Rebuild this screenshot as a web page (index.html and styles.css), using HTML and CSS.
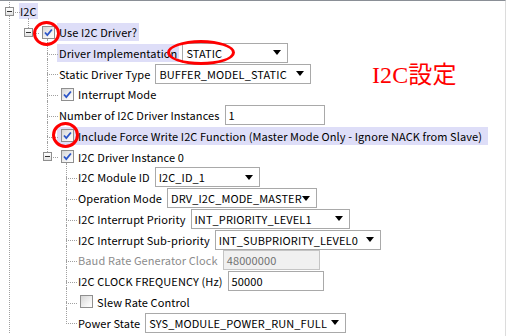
FILE: index.html
```html
<!DOCTYPE html>
<html lang="ja">
<head>
    <meta charset="UTF-8">
    <title>I2C設定</title>
    <link rel="stylesheet" href="styles.css">
</head>
<body>
    <div class="panel">
        <ul class="tree">
            <li class="more">
                <div class="row"><span class="handle"></span><span class="label hl">I2C</span></div>
                <ul>
                    <li>
                        <div class="row">
                            <span class="handle"></span>
                            <span class="check"><svg width="13" height="13" viewBox="0 0 13 13"><path d="M3 6.5l2.3 2.6 4.6-5.6" fill="none" stroke="#2b55c8" stroke-width="1.8"/></svg></span>
                            <span class="label hl">Use I2C Driver?</span>
                        </div>
                        <ul>
                            <li>
                                <div class="row"><span class="label hl">Driver Implementation</span><span class="select impl">STATIC<i class="arrow"></i></span></div>
                            </li>
                            <li>
                                <div class="row"><span class="label">Static Driver Type</span><span class="select buffer">BUFFER_MODEL_STATIC<i class="arrow"></i></span></div>
                            </li>
                            <li>
                                <div class="row">
                                    <span class="check"><svg width="13" height="13" viewBox="0 0 13 13"><path d="M3 6.5l2.3 2.6 4.6-5.6" fill="none" stroke="#2b55c8" stroke-width="1.8"/></svg></span>
                                    <span class="label">Interrupt Mode</span>
                                </div>
                            </li>
                            <li>
                                <div class="row"><span class="label">Number of I2C Driver Instances</span><span class="field count">1</span></div>
                            </li>
                            <li>
                                <div class="row">
                                    <span class="cell hl-row">
                                        <span class="check"><svg width="13" height="13" viewBox="0 0 13 13"><path d="M3 6.5l2.3 2.6 4.6-5.6" fill="none" stroke="#2b55c8" stroke-width="1.8"/></svg></span>
                                        <span class="label">Include Force Write I2C Function (Master Mode Only - Ignore NACK from Slave)</span>
                                    </span>
                                </div>
                            </li>
                            <li>
                                <div class="row">
                                    <span class="handle"></span>
                                    <span class="check"><svg width="13" height="13" viewBox="0 0 13 13"><path d="M3 6.5l2.3 2.6 4.6-5.6" fill="none" stroke="#2b55c8" stroke-width="1.8"/></svg></span>
                                    <span class="label">I2C Driver Instance 0</span>
                                </div>
                                <ul>
                                    <li>
                                        <div class="row"><span class="label">I2C Module ID</span><span class="select module">I2C_ID_1<i class="arrow"></i></span></div>
                                    </li>
                                    <li>
                                        <div class="row"><span class="label">Operation Mode</span><span class="select mode">DRV_I2C_MODE_MASTER<i class="arrow"></i></span></div>
                                    </li>
                                    <li>
                                        <div class="row"><span class="label">I2C Interrupt Priority</span><span class="select prio">INT_PRIORITY_LEVEL1<i class="arrow"></i></span></div>
                                    </li>
                                    <li>
                                        <div class="row"><span class="label">I2C Interrupt Sub-priority</span><span class="select subprio">INT_SUBPRIORITY_LEVEL0<i class="arrow"></i></span></div>
                                    </li>
                                    <li>
                                        <div class="row"><span class="label off">Baud Rate Generator Clock</span><span class="field baud disabled">48000000</span></div>
                                    </li>
                                    <li>
                                        <div class="row"><span class="label">I2C CLOCK FREQUENCY (Hz)</span><span class="field freq">50000</span></div>
                                    </li>
                                    <li>
                                        <div class="row">
                                            <span class="check"></span>
                                            <span class="label">Slew Rate Control</span>
                                        </div>
                                    </li>
                                    <li>
                                        <div class="row"><span class="label">Power State</span><span class="select power">SYS_MODULE_POWER_RUN_FULL<i class="arrow"></i></span></div>
                                    </li>
                                </ul>
                            </li>
                        </ul>
                    </li>
                </ul>
            </li>
        </ul>

        <!-- anotações em vermelho -->
        <span class="mark mark-driver"></span>
        <span class="mark mark-static"></span>
        <span class="mark mark-force"></span>
        <div class="note">I2C設定</div>
    </div>
</body>
</html>
```

FILE: styles.css
```css
* {
    box-sizing: border-box;
}

body {
    margin: 0;
    background: #fff;
    color: #000;
    font-family: "Noto Sans CJK JP", "Noto Sans", sans-serif;
    font-size: 11px;
    letter-spacing: 0.1px;
}

.panel {
    position: relative;
    width: 506px;
    height: 336px;
    overflow: hidden;
    border-top: 1px solid #8a8f96;
    border-right: 1px solid #dcdcdc;
}

/* Árvore */

.tree,
.tree ul {
    list-style: none;
    margin: 0 0 0 9px;
    padding: 0;
}

.tree li {
    position: relative;
    padding-left: 10px;
}

.tree li::before {
    content: "";
    position: absolute;
    left: 0;
    top: -4px;
    width: 10px;
    height: 15px;
    border-left: 1px dotted #a0a0a0;
    border-bottom: 1px dotted #a0a0a0;
}

.tree li::after {
    content: "";
    position: absolute;
    left: 0;
    top: 10px;
    bottom: 0;
    border-left: 1px dotted #a0a0a0;
}

.tree li:last-child::after {
    display: none;
}

.tree li.more::after {
    display: block;
}

.row {
    display: flex;
    align-items: center;
    height: 20.75px;
    white-space: nowrap;
}

.handle {
    position: absolute;
    left: -4px;
    top: 6px;
    width: 9px;
    height: 9px;
    border: 1px solid #8e8e8e;
    background: linear-gradient(#fff, #e2e2e2);
    z-index: 1;
}

.handle::after {
    content: "";
    position: absolute;
    left: 1px;
    top: 3px;
    width: 5px;
    height: 1px;
    background: #333;
}

.label {
    padding: 0 2px;
    line-height: 18px;
}

.label.off {
    color: #8c8c8c;
}

.hl {
    background: #dedef8;
}

.tree > li > .row .hl {
    padding: 0 1px;
    line-height: 16px;
}

.cell {
    display: flex;
    align-items: center;
    height: 18px;
}

.hl-row {
    background: #dedef8;
    padding-right: 4px;
}

.check {
    display: block;
    width: 13px;
    height: 13px;
    margin: 0 2px 0 4px;
    border: 1px solid #8f8f8f;
    background: linear-gradient(135deg, #d6d6d6, #f6f6f6 70%, #fff);
    flex: none;
}

.check svg {
    display: block;
    margin: -1px 0 0 -1px;
}

/* Campos */

.select,
.field {
    display: flex;
    align-items: center;
    height: 20px;
    margin-left: 3px;
    padding-left: 3px;
    border: 1px solid #a9a9a9;
    background: #fff;
    flex: none;
}

.arrow {
    margin-left: auto;
    margin-right: 6px;
    width: 0;
    height: 0;
    border-left: 4px solid transparent;
    border-right: 4px solid transparent;
    border-top: 5px solid #000;
}

.field.disabled {
    background: #f0f0f0;
    border-color: #c4c4c4;
    color: #707070;
}

.impl { width: 106px; }
.buffer { width: 156px; }
.count { width: 100px; }
.module { width: 105px; }
.mode { width: 150px; }
.prio { width: 159px; }
.subprio { width: 166px; }
.baud { width: 97px; }
.freq { width: 96px; }
.power { width: 201px; }

/* Marcas vermelhas */

.mark {
    position: absolute;
    border: 3px solid #f00;
    border-radius: 50%;
}

.mark-driver {
    left: 33px;
    top: 20px;
    width: 27px;
    height: 25px;
}

.mark-static {
    left: 167px;
    top: 39px;
    width: 68px;
    height: 25px;
}

.mark-force {
    left: 52px;
    top: 121px;
    width: 27px;
    height: 26px;
}

.note {
    position: absolute;
    left: 372px;
    top: 60px;
    color: #f00;
    font-family: "Liberation Serif", "Noto Sans CJK JP", serif;
    font-size: 24px;
    line-height: 28px;
}
```
